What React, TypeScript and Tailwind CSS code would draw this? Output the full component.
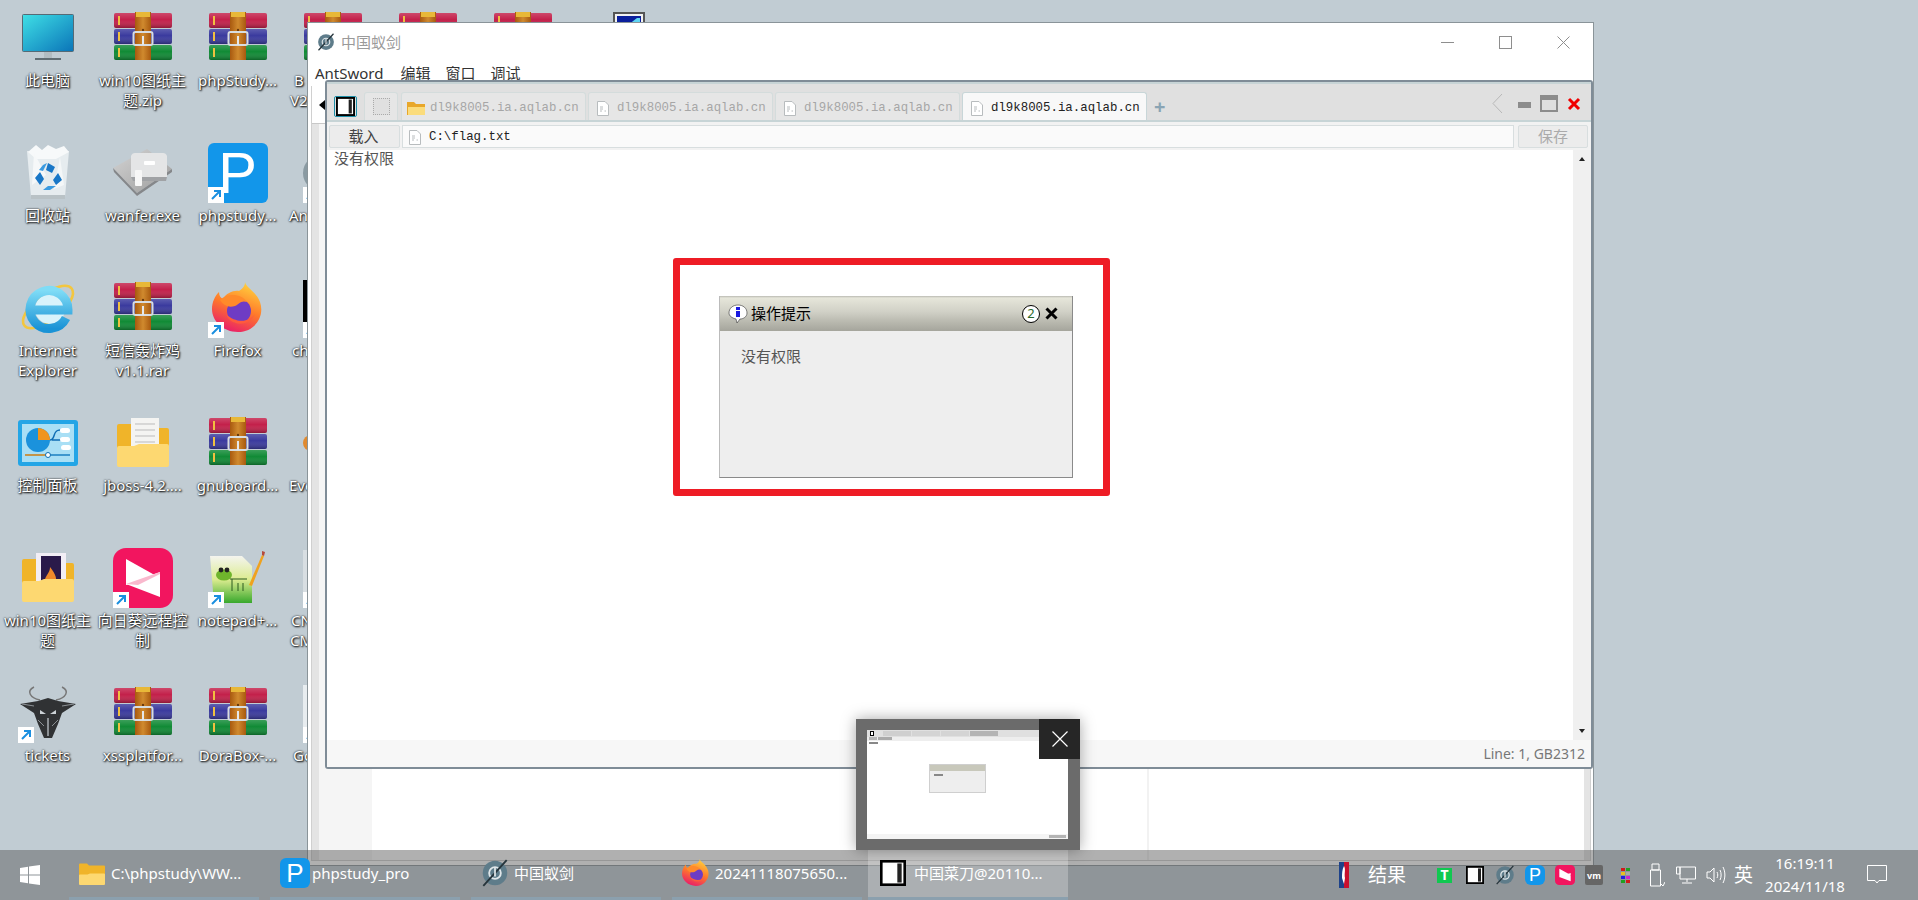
import type { ReactNode } from "react"

const sans = "font-['Noto_Sans','Noto_Sans_CJK_SC',sans-serif]"
const mono = "font-['Liberation_Mono','Noto_Sans_CJK_SC',monospace]"
const labelText = "whitespace-pre text-center text-[15px] leading-[20px] text-white [text-shadow:1px_1px_2px_#000,0_0_2px_#000]"

const RarIcon = () => (
  <svg width="58" height="48" viewBox="0 0 58 48" className="mb-1">
    <defs>
      <linearGradient id="bookShade" x1="0" y1="0" x2="0" y2="1">
        <stop offset="0" stopColor="#fff" stopOpacity="0.18" />
        <stop offset="0.45" stopColor="#fff" stopOpacity="0" />
        <stop offset="1" stopColor="#000" stopOpacity="0.28" />
      </linearGradient>
      <linearGradient id="strap" x1="0" y1="0" x2="1" y2="0">
        <stop offset="0" stopColor="#a8590f" />
        <stop offset="0.5" stopColor="#d08a2e" />
        <stop offset="1" stopColor="#a8590f" />
      </linearGradient>
    </defs>
    <rect x="0" y="1" width="58" height="15" rx="2" fill="#c3204a" />
    <rect x="0" y="17" width="58" height="15" rx="2" fill="#3a3a9e" />
    <rect x="0" y="33" width="58" height="15" rx="2" fill="#108a35" />
    <rect x="0" y="1" width="58" height="15" rx="2" fill="url(#bookShade)" />
    <rect x="0" y="17" width="58" height="15" rx="2" fill="url(#bookShade)" />
    <rect x="0" y="33" width="58" height="15" rx="2" fill="url(#bookShade)" />
    <rect x="4" y="4" width="2" height="9" fill="#f0c040" />
    <rect x="4" y="20" width="2" height="9" fill="#f0c040" />
    <rect x="4" y="36" width="2" height="9" fill="#f0c040" />
    <rect x="21" y="0" width="16" height="48" fill="url(#strap)" />
    <rect x="22" y="0" width="14" height="5" fill="#e8b838" />
    <circle cx="29" cy="18" r="1.2" fill="#6b3a0c" />
    <rect x="19.5" y="20" width="19" height="13" rx="2" fill="none" stroke="#d8dde0" strokeWidth="2" />
    <rect x="28" y="24" width="2" height="9" fill="#e6e8ea" />
  </svg>
)

const AntLogo = ({ size = 18 }: { size?: number }) => (
  <svg width={size} height={size} viewBox="0 0 24 24">
    <circle cx="12" cy="12" r="10.5" fill="#5e7c8a" />
    <circle cx="12" cy="12" r="5" fill="none" stroke="#dfe6e9" strokeWidth="1.6" />
    <path d="M2 23 L22 1" stroke="#26343b" strokeWidth="1.6" />
    <path d="M12 7 V15" stroke="#dfe6e9" strokeWidth="1.5" />
  </svg>
)

const Shortcut = () => (
  <span className="absolute left-0 bottom-0 flex h-4 w-4 items-center justify-center bg-white">
    <svg width="12" height="12" viewBox="0 0 12 12">
      <path d="M2 10 L9 3 M4 2 H10 V8" stroke="#1a8fe0" strokeWidth="2" fill="none" />
    </svg>
  </span>
)

const Firefox = ({ size = 52 }: { size?: number }) => (
  <svg width={size} height={size} viewBox="0 0 52 52">
    <defs>
      <linearGradient id="ff" x1="0.7" y1="0" x2="0.3" y2="1">
        <stop offset="0" stopColor="#ffd23e" />
        <stop offset="0.5" stopColor="#ff7a2a" />
        <stop offset="1" stopColor="#e8196c" />
      </linearGradient>
    </defs>
    <path d="M33 0 C34 6 44 9 48 20 C53 34 43 50 26 50 C11 50 0 39 0 27 C0 20 3 14 7 10 C7 14 9 16 11 17 C14 11 22 8 27 9 C31 6 33 4 33 0Z" fill="url(#ff)" />
    <circle cx="27" cy="29" r="12" fill="#6e3cc4" />
    <path d="M8 18 C16 10 30 12 35 20 C29 18 27 22 23 24 C17 26 12 24 8 18Z" fill="#ff8a2a" />
    <path d="M14 32 C18 44 36 46 43 32 C38 40 24 42 14 32Z" fill="#ff5a3c" />
  </svg>
)

const FolderBase = ({ w, h, children }: { w: number; h: number; children?: ReactNode }) => (
  <svg width={w} height={h} viewBox="0 0 52 50">
    <path d="M0 8 Q0 6 2 6 H16 L20 10 H50 Q52 10 52 12 V30 H0Z" fill="#f0b429" />
    {children}
    <path d="M0 30 Q0 28 2 28 H17 L22 26 H50 Q52 26 52 28 V47 Q52 49 50 49 H2 Q0 49 0 47Z" fill="#fdd871" />
  </svg>
)

const RecycleBin = () => (
  <svg width="44" height="56" viewBox="0 0 44 56">
    <path d="M1 6 L5 52 Q5 54 8 54 H36 Q39 54 39 52 L43 6 Z" fill="#e6ecef" />
    <path d="M2 7 L10 0 L16 5 L22 0 L30 4 L38 1 L43 7 L30 14 L10 14Z" fill="#f7f9fa" />
    <path d="M8 8 L20 30 L6 40Z" fill="#f6f8f9" />
    <path d="M34 12 L28 44 L38 40Z" fill="#f4f7f8" />
    <path d="M5 50 H39 V54 H5Z" fill="#b9c2c6" />
    <path d="M22 18 L29 22 L26 28 L20 25 Z M32 28 L36 35 L30 40 L27 35Z M14 40 L9 33 L14 27 L18 34Z" fill="#1977c7" />
    <path d="M17 20 L21 18 L17 26 L13 25Z M22 41 H30 L24 45 H17Z" fill="#3a9ae0" />
  </svg>
)

const AppleTv = () => (
  <svg width="60" height="48" viewBox="0 0 60 48">
    <defs>
      <linearGradient id="tvBase" x1="0" y1="0" x2="1" y2="1">
        <stop offset="0" stopColor="#d4d4d4" />
        <stop offset="1" stopColor="#9c9c9c" />
      </linearGradient>
    </defs>
    <path d="M0 19 L34 0 L59 20 L24 44Z" fill="url(#tvBase)" />
    <path d="M0 19 L24 44 L59 20 L59 23 L24 47 L1 23Z" fill="#85878a" />
    <path d="M18 7 Q19 4 22 4 H50 Q53 4 54 7 L54 28 H18Z" fill="#e4e5e6" />
    <path d="M18 28 H54 L53 32 H20Z" fill="#a0a2a5" />
    <rect x="31" y="12" width="11" height="4" rx="1" fill="#fff" />
    <rect x="22" y="21" width="7" height="16" rx="1" fill="#f7f7f7" />
  </svg>
)

const IeIcon = () => (
  <svg width="58" height="54" viewBox="0 0 58 54">
    <defs>
      <linearGradient id="ieBlue" x1="0" y1="0" x2="0" y2="1">
        <stop offset="0" stopColor="#7fdcf6" />
        <stop offset="1" stopColor="#1a93d6" />
      </linearGradient>
    </defs>
    <ellipse cx="29" cy="26" rx="30" ry="13" transform="rotate(-38 29 26)" fill="none" stroke="#f3c63f" strokeWidth="2.6" />
    <circle cx="31" cy="28" r="15" fill="#d8f3fb" />
    <path d="M47 37 A19 19 0 1 1 49 29 H14" fill="none" stroke="url(#ieBlue)" strokeWidth="9" />
  </svg>
)

const ControlPanel = () => (
  <svg width="60" height="46" viewBox="0 0 60 46">
    <rect width="60" height="46" rx="3" fill="#23a5e6" />
    <rect x="4" y="4" width="52" height="38" fill="#a9dff5" />
    <circle cx="20" cy="20" r="12" fill="#1b92dc" />
    <path d="M20 8 A12 12 0 0 1 32 20 H20Z" fill="#f0951d" />
    <path d="M32 20 C38 20 34 10 42 10 M34 20 H44" stroke="#0f6eb4" strokeWidth="1.5" fill="none" />
    <rect x="42" y="8" width="10" height="5" rx="2.5" fill="#fff" />
    <rect x="42" y="17" width="10" height="5" rx="2.5" fill="#fff" />
    <rect x="43" y="25" width="10" height="5" rx="2.5" fill="#fff" />
    <path d="M7 35 H52" stroke="#1b7fc0" strokeWidth="1.5" />
    <path d="M7 35 H28" stroke="#f0951d" strokeWidth="1.5" />
    <circle cx="30" cy="35" r="2.5" fill="#fff" stroke="#0f6eb4" />
  </svg>
)

const SunloginIcon = () => (
  <svg width="60" height="60" viewBox="0 0 60 60">
    <rect width="60" height="60" rx="13" fill="#f2155f" />
    <path d="M13 11 L47 30 L13 37Z" fill="#fff" />
    <path d="M47 49 L13 36 L47 24Z" fill="#fff" />
    <path d="M13 36 L47 24 L47 26 L25 37Z" fill="#f9b8cd" />
  </svg>
)

const NotepadIcon = () => (
  <svg width="56" height="54" viewBox="0 0 56 54">
    <defs>
      <linearGradient id="np" x1="0" y1="0" x2="0" y2="1">
        <stop offset="0" stopColor="#f4f4ef" />
        <stop offset="0.5" stopColor="#dcec90" />
        <stop offset="1" stopColor="#38a82c" />
      </linearGradient>
    </defs>
    <path d="M0 5 H32 L42 15 V52 H4Z" fill="url(#np)" />
    <ellipse cx="14" cy="24" rx="8" ry="5.5" fill="#6fb52c" />
    <circle cx="11" cy="19" r="2.4" fill="#222" />
    <circle cx="17" cy="19" r="2.4" fill="#222" />
    <path d="M20 28 H37 M22 28 V40 M28 32 V40 M33 32 V40" stroke="#2b5a1e" strokeWidth="1" />
    <path d="M39 34 L52 4 L54 5 L42 35Z" fill="#efa21f" />
    <path d="M52 0 L55 1 L54 5 L52 4Z" fill="#b54a3c" />
  </svg>
)

const Tickets = () => (
  <svg width="56" height="54" viewBox="0 0 56 54">
    <path d="M14 1 C6 5 10 12 20 14 M42 1 C50 5 46 12 36 14" stroke="#777" strokeWidth="1.5" fill="none" />
    <path d="M0 18 L18 15 L28 12 L38 15 L56 18 L42 27 L38 38 L32 52 H24 L18 38 L14 27Z" fill="#303234" />
    <path d="M2 18 L14 20 M54 18 L42 20 M18 34 L24 40 M38 34 L32 40" stroke="#8c9195" strokeWidth="1" />
    <path d="M20 24 L26 28 L20 28Z M36 24 L30 28 L36 28Z" fill="#ccd2d6" />
    <path d="M27 32 H29 V50 H27Z" fill="#8b9094" />
  </svg>
)

const Monitor = () => (
  <svg width="52" height="48" viewBox="0 0 52 48">
    <defs>
      <linearGradient id="mon" x1="0" y1="0" x2="1" y2="1">
        <stop offset="0" stopColor="#3fe0e6" />
        <stop offset="1" stopColor="#0a74b8" />
      </linearGradient>
    </defs>
    <rect x="0.5" y="0.5" width="51" height="37" rx="1" fill="url(#mon)" stroke="#566a75" />
    <rect x="22" y="38" width="8" height="6" fill="#b2bcc1" />
    <rect x="13" y="44" width="26" height="2" fill="#606c72" />
  </svg>
)

const PBadge = ({ size, text }: { size: number; text: string }) => (
  <span
    className={`flex items-center justify-center rounded-md bg-[#1296ea] font-['Liberation_Sans',sans-serif] text-white ${text}`}
    style={{ width: size, height: size }}
  >
    P
  </span>
)

const CaidaoIcon = ({ w, h }: { w: number; h: number }) => (
  <svg width={w} height={h} viewBox="0 0 30 30">
    <rect x="1.5" y="1.5" width="27" height="27" fill="#fff" stroke="#000" strokeWidth="3" />
    <rect x="20" y="4" width="5" height="22" fill="#222" />
  </svg>
)

const FileIcon = () => (
  <svg width="12" height="15" viewBox="0 0 12 15" className="shrink-0">
    <path d="M0.5 0.5 H8 L11.5 4 V14.5 H0.5Z" fill="#fff" stroke="#b8bcbe" />
    <path d="M3 6 H6 M3 8 H6 M3 10 H5 M7.5 10 H9" stroke="#b8bcbe" />
  </svg>
)

const WinClose = () => (
  <svg width="13" height="13" viewBox="0 0 13 13">
    <path d="M0.5 0.5 L12.5 12.5 M12.5 0.5 L0.5 12.5" stroke="#8e8e8e" />
  </svg>
)

const ThinIcon = () => (
  <svg width="32" height="52" viewBox="0 0 32 52" className="ml-[22px]">
    <rect x="1" y="1" width="30" height="50" fill="#f2f2f2" stroke="#555" strokeWidth="2" />
    <rect x="4" y="4" width="24" height="44" fill="#0a1f9c" />
    <path d="M6 20 L24 6 L27 6 L27 14 L12 26 L6 26Z" fill="#5fd4f2" />
  </svg>
)

type Item = { icon?: ReactNode; label?: string; short?: boolean; offset?: string }

const columns: Item[][] = [
  [
    { icon: <Monitor />, label: "此电脑" },
    { icon: <RecycleBin />, label: "回收站" },
    { icon: <IeIcon />, label: "Internet\nExplorer" },
    { icon: <ControlPanel />, label: "控制面板" },
    { icon: <FolderBase w={52} h={50}><rect x="14" y="0" width="30" height="36" fill="#f2eef5" /><rect x="19" y="3" width="20" height="30" fill="#2a1a4a" /><path d="M24 32 C20 24 28 22 28 14 C34 22 36 26 32 32Z" fill="#ef8a2a" /></FolderBase>, label: "win10图纸主\n题" },
    { icon: <Tickets />, label: "tickets", short: true },
  ],
  [
    { icon: <RarIcon />, label: "win10图纸主\n题.zip" },
    { icon: <AppleTv />, label: "wanfer.exe" },
    { icon: <RarIcon />, label: "短信轰炸鸡\nv1.1.rar" },
    { icon: <FolderBase w={52} h={50}><rect x="14" y="0" width="28" height="34" fill="#f4f4f2" /><path d="M18 6 H38 M18 12 H38 M18 18 H38 M18 24 H38" stroke="#bbb" /></FolderBase>, label: "jboss-4.2...." },
    { icon: <SunloginIcon />, label: "向日葵远程控\n制", short: true },
    { icon: <RarIcon />, label: "xssplatfor..." },
  ],
  [
    { icon: <RarIcon />, label: "phpStudy..." },
    { icon: <PBadge size={60} text="text-[58px] leading-none" />, label: "phpstudy...", short: true },
    { icon: <Firefox />, label: "Firefox", short: true },
    { icon: <RarIcon />, label: "gnuboard..." },
    { icon: <NotepadIcon />, label: "notepad+...", short: true },
    { icon: <RarIcon />, label: "DoraBox-..." },
  ],
  // this column mostly sits under the window, only the start of each label shows
  [
    { icon: <RarIcon />, label: "B\nV2", offset: "ml-[5px] self-start" },
    { icon: <span className="h-9 w-[60px] rounded-full bg-[#8a9aa2]" />, label: "An", short: true, offset: "ml-[4px] self-start" },
    { icon: <span className="h-[56px] w-[60px] bg-black" />, label: "ch", short: true, offset: "ml-[7px] self-start" },
    { icon: <span className="h-4 w-[60px] rounded-full bg-[#e08a30]" />, label: "Eve", offset: "ml-[4px] self-start" },
    { icon: <span className="h-[56px] w-[60px] bg-[#d8dee2]" />, label: "CN\nCM", short: true, offset: "ml-[5px] self-start" },
    { icon: <span className="h-[56px] w-[60px] bg-[#e8edf0]" />, label: "Go", short: true, offset: "ml-[8px] self-start" },
  ],
  [{ icon: <RarIcon /> }],
  [{ icon: <RarIcon /> }],
  [{ icon: <ThinIcon /> }],
]

const DesktopIcon = ({ icon, label, short, offset }: Item) => (
  <div className="flex h-[135px] w-[95px] shrink-0 flex-col items-center">
    <div className="relative flex h-[60px] w-[60px] shrink-0 items-center justify-center">
      {icon}
      {short && <Shortcut />}
    </div>
    {label && <div className={`mt-[2px] ${labelText} ${offset ?? ""}`}>{label}</div>}
  </div>
)

const Tab = ({ children, active }: { children: ReactNode; active?: boolean }) => (
  <div
    className={`flex h-[28px] w-[185px] items-center gap-[5px] rounded-t-[3px] border border-b-0 pl-[5px] pt-[3px] text-[12.4px] ${mono} ${
      active ? "border-[#c8d6d8] bg-[#f8f8f8] text-[#222]" : "border-[#d4dcdc] bg-[#e6e6e6] text-[#a6a6a6]"
    }`}
  >
    {children}
  </div>
)

const Mini = () => (
  <div className="relative h-[109px] w-[201px] bg-white">
    <div className="flex h-[7px] items-center gap-[1px] bg-[#e0e0e0] pl-[3px]">
      <span className="h-[5px] w-[4px] border border-black bg-white" />
      <span className="ml-[8px] h-[5px] w-[28px] bg-[#cfcfcf]" />
      <span className="h-[5px] w-[28px] bg-[#d4d4d4]" />
      <span className="h-[5px] w-[28px] bg-[#d4d4d4]" />
      <span className="h-[5px] w-[28px] bg-[#b4b4b4]" />
    </div>
    <div className="flex h-[4px] gap-[1px] bg-[#eeeeee] pl-[2px]">
      <span className="h-[3px] w-[8px] bg-[#b5b5b5]" />
      <span className="h-[3px] w-[14px] bg-[#aaaaaa]" />
    </div>
    <div className="ml-[2px] mt-[1px] h-[2px] w-[9px] bg-[#888]" />
    <div className="absolute left-[62px] top-[34px] h-[29px] w-[57px] border border-[#cfcfcf] bg-[#eeeeee]">
      <div className="h-[6px] bg-[#c8c8bb]" />
      <div className="ml-[4px] mt-[3px] h-[2px] w-[9px] bg-[#888]" />
    </div>
    <div className="absolute bottom-0 left-0 flex h-[5px] w-full justify-end bg-[#f4f4f4] pr-[2px]">
      <span className="mt-[1px] h-[3px] w-[17px] bg-[#b4b4b4]" />
    </div>
  </div>
)

const TaskItem = ({ children, active, width }: { children: ReactNode; active?: boolean; width: string }) => (
  <div
    className={`flex h-full items-center gap-[6px] border-b-[3px] border-[#8ba0ae] pb-[1px] pl-[10px] ${width} ${
      active ? "bg-white/25" : ""
    }`}
  >
    {children}
  </div>
)

export default function App() {
  return (
    <div className={`relative h-[900px] w-[1918px] overflow-hidden bg-[#c1ccd3] ${sans}`}>
      {/* desktop */}
      <div className="flex pt-[8px]">
        {columns.map((col, i) => (
          <div key={i} className="flex flex-col">
            {col.map((item, j) => (
              <DesktopIcon key={j} {...item} />
            ))}
          </div>
        ))}
      </div>

      {/* antsword shell window behind */}
      <div className="absolute left-[307px] top-[22px] flex h-[844px] w-[1287px] flex-col border border-[#8a9499] bg-white">
        <div className="flex h-[38px] items-center pl-[9px]">
          <AntLogo />
          <span className="ml-[6px] text-[15px] text-[#9a9a9a]">中国蚁剑</span>
          <div className="ml-auto flex items-center">
            <span className="h-px w-[13px] bg-[#8e8e8e]" />
            <span className="ml-[45px] h-[13px] w-[13px] border border-[#8e8e8e]" />
            <span className="ml-[45px] mr-[23px] flex"><WinClose /></span>
          </div>
        </div>
        <div className="flex h-[24px] items-center gap-[15px] pl-[7px] text-[15px] leading-none text-[#333]">
          <span className="mr-[2px]">AntSword</span>
          <span>编辑</span>
          <span>窗口</span>
          <span>调试</span>
        </div>
        <div className="ml-[3px] mr-[2px] mt-[1px] flex min-h-0 flex-1 flex-col border-x border-b border-[#d0d0d0]">
          <div className="flex h-[38px] items-center border-b border-[#c8c8c8] pl-[7px] text-[10px]">
            <span className="h-0 w-0 border-y-[5px] border-r-[6px] border-y-transparent border-r-black" />
          </div>
          <div className="flex min-h-0 flex-1">
            <div className="w-[7px] bg-[#e4e4e4]" />
            <div className="w-[53px] bg-[#f5f5f5]" />
            <div className="w-[775px]" />
            <div className="w-[2px] bg-[#f2f2f2]" />
            <div className="flex-1" />
            <div className="w-[6px] bg-[#e4e4e4]" />
          </div>
        </div>
        <div className="h-[4px]" />
      </div>

      {/* caidao window */}
      <div className="absolute left-[325px] top-[80px] flex h-[689px] w-[1268px] flex-col rounded-[3px] border-2 border-[#7f8c97] bg-white">
        <div className="flex h-[40px] items-end border-y-[2px] border-t-[#c7d4d6] border-b-[#c7d4d6] bg-[#e0e0e0] pl-[7px]">
          <div className="mb-[3px] mr-[7px] flex">
            <span className="flex rounded-[2px] border border-[#1f8fa8]"><CaidaoIcon w={21} h={19} /></span>
          </div>
          <div className="flex h-[28px] w-[34px] items-center justify-center rounded-t-[3px] border border-b-0 border-[#d4dcdc] bg-[#e6e6e6]">
            <span className="h-[17px] w-[17px] border border-dotted border-[#aaa] bg-[#e0e0e0]" />
          </div>
          <div className="ml-[3px] flex gap-[2px]">
            <Tab>
              <svg width="19" height="16" viewBox="0 0 19 16" className="shrink-0">
                <path d="M0 2 H7 L9 4 H18 V15 H0Z" fill="#e8a72a" />
                <path d="M1 7 H18 V15 H1Z" fill="#fbdc7c" />
              </svg>
              <span className="-ml-[1px]">dl9k8005.ia.aqlab.cn</span>
            </Tab>
            <Tab><span className="mx-[3px] flex"><FileIcon /></span>dl9k8005.ia.aqlab.cn</Tab>
            <Tab><span className="mx-[3px] flex"><FileIcon /></span>dl9k8005.ia.aqlab.cn</Tab>
            <Tab active><span className="mx-[3px] flex"><FileIcon /></span>dl9k8005.ia.aqlab.cn</Tab>
          </div>
          <span className="mb-[1px] ml-[7px] text-[20px] font-bold leading-[24px] text-[#8aa4b4]">+</span>
          <div className="mb-[6px] ml-auto flex items-center pr-[10px]">
            <svg width="11" height="21" viewBox="0 0 11 21"><path d="M10 1 L1 10.5 L10 20" fill="none" stroke="#b8b8b8" /></svg>
            <span className="ml-[15px] mt-[2px] h-[6px] w-[13px] bg-[#8c8c8c]" />
            <span className="ml-[9px] h-[17px] w-[18px] border-2 border-t-[5px] border-[#8c8c8c] bg-[#dedede]" />
            <svg width="14" height="14" viewBox="0 0 14 14" className="ml-[9px]"><path d="M2 2 L12 12 M12 2 L2 12" stroke="#f00000" strokeWidth="3" /></svg>
          </div>
        </div>
        <div className="flex h-[28px] items-start gap-[2px] bg-[#f2f2f2] px-[2px] pr-[3px] pt-[3px]">
          <div className="flex h-[23px] w-[71px] items-center justify-center rounded-[2px] border border-[#d8dedf] bg-[#ececec] pr-[2px] text-[15px] text-[#444]">载入</div>
          <div className={`flex h-[23px] flex-1 items-center gap-[8px] border border-[#d8dedf] bg-[#fafafa] pl-[6px] pt-[1px] text-[12.4px] text-[#222] ${mono}`}>
            <FileIcon />
            C:\flag.txt
          </div>
          <div className="ml-[2px] flex h-[23px] w-[70px] items-center justify-center rounded-[2px] border border-[#d8dedf] bg-[#ececec] text-[15px] text-[#aaa]">保存</div>
        </div>
        <div className="flex min-h-0 flex-1">
          <div className="flex-1 pl-[7px] text-[15px] leading-[16px] text-[#555]">没有权限</div>
          <div className="flex w-[18px] flex-col items-center justify-between bg-[#f0f0f0] py-[7px]">
            <span className="h-0 w-0 border-x-[3.5px] border-b-[4px] border-x-transparent border-b-[#222]" />
            <span className="h-0 w-0 border-x-[3.5px] border-t-[4px] border-x-transparent border-t-[#222]" />
          </div>
        </div>
        <div className="flex h-[27px] items-center justify-end bg-[#f7f7f7] pr-[6px] text-[14px] text-[#777]">Line: 1, GB2312</div>
      </div>

      {/* red annotation */}
      <div className="absolute left-[673px] top-[258px] h-[238px] w-[437px] rounded-[3px] border-[7px] border-[#ee1c25] bg-white pl-[39px] pt-[31px]">
        <div className="flex h-[182px] w-[354px] flex-col border-x border-b border-l-[#bbbbbb] border-r-[#8a8a8a] border-b-[#8a8a8a] bg-[#eeeeee]">
          <div className="flex h-[35px] items-center bg-[linear-gradient(#b9b9b2_0,#e6e6da_2px,#d0d0c6_16px,#bdbdb3_24px,#a5a59c_100%)] pl-[8px] pr-[14px] text-[15px] text-black">
            <svg width="20" height="20" viewBox="0 0 20 20">
              <path d="M10 1 C15 1 19 4 19 9 C19 13 15 15 12 15 L9 19 L8 15 C4 14 1 12 1 9 C1 4 5 1 10 1Z" fill="#fff" stroke="#333" strokeWidth="0.6" />
              <rect x="8" y="7" width="4" height="6" fill="#1a1ae0" />
              <rect x="8" y="3" width="4" height="3" fill="#1a1ae0" />
            </svg>
            <span className="ml-[3px]">操作提示</span>
            <span className="ml-auto flex h-[18px] w-[18px] items-center justify-center rounded-full border border-black bg-white text-[13px] leading-none text-[#2a6a2a]">2</span>
            <svg width="13" height="13" viewBox="0 0 13 13" className="ml-[5px]"><path d="M1.5 1.5 L11.5 11.5 M11.5 1.5 L1.5 11.5" stroke="#000" strokeWidth="3" /></svg>
          </div>
          <div className="pl-[21px] pt-[14px] text-[15px] leading-[22px] text-[#555]">没有权限</div>
        </div>
      </div>

      {/* taskbar */}
      <div className="absolute inset-x-0 bottom-0 flex h-[50px] items-center bg-[rgba(87,87,87,0.47)] text-white">
        <div className="flex h-full w-[69px] items-center pl-[20px]">
          <svg width="20" height="20" viewBox="0 0 20 20" fill="#fff">
            <path d="M0 3 L8 1.8 V9.5 H0Z M9 1.6 L20 0 V9.5 H9Z M0 10.5 H8 V18.2 L0 17Z M9 10.5 H20 V20 L9 18.4Z" />
          </svg>
        </div>
        <TaskItem width="w-[190px]">
          <FolderBase w={26} h={26} />
          <span className="text-[15px]">C:\phpstudy\WW...</span>
        </TaskItem>
        <div className="w-[11px]" />
        <TaskItem width="w-[190px]">
          <PBadge size={30} text="text-[26px] leading-none" />
          <span className="-ml-[4px] text-[15px]">phpstudy_pro</span>
        </TaskItem>
        <div className="w-[11px]" />
        <TaskItem width="w-[190px]">
          <AntLogo size={28} />
          <span className="-ml-[1px] text-[15px]">中国蚁剑</span>
        </TaskItem>
        <div className="w-[11px]" />
        <TaskItem width="w-[190px]">
          <Firefox size={28} />
          <span className="-ml-[1px] text-[15px]">20241118075650...</span>
        </TaskItem>
        <div className="w-[6px]" />
        <TaskItem active width="w-[200px]">
          <CaidaoIcon w={30} h={26} />
          <span className="text-[15px]">中国菜刀@20110...</span>
        </TaskItem>

        <div className="ml-auto flex h-full items-center">
          <svg width="10" height="26" viewBox="0 0 10 26">
            <rect width="10" height="26" rx="1" fill="#fff" />
            <path d="M0 0 H5 V26 H0Z" fill="#1d428a" />
            <path d="M5 0 H10 V26 H5Z" fill="#c8102e" />
            <path d="M5 4 C7 7 5 12 6 16 L5 22 L3 16 C3 11 3 8 5 4Z" fill="#fff" />
          </svg>
          <span className="ml-[19px] w-[69px] text-[19px]">结果</span>
          <span className="flex h-[15px] w-[15px] items-center justify-center bg-[#10c850] text-[14px] font-bold leading-none">T</span>
          <span className="ml-[13px] flex"><CaidaoIcon w={20} h={18} /></span>
          <span className="ml-[10px] flex"><AntLogo size={20} /></span>
          <span className="ml-[10px] flex"><PBadge size={20} text="text-[18px] leading-none" /></span>
          <span className="ml-[10px] flex">
            <svg width="20" height="20" viewBox="0 0 60 60">
              <rect width="60" height="60" rx="13" fill="#f2155f" />
              <path d="M13 11 L47 30 L13 37Z M47 49 L13 36 L47 24Z" fill="#fff" />
            </svg>
          </span>
          <span className="ml-[10px] flex h-[20px] w-[18px] items-center justify-center rounded-[2px] bg-[#666] text-[9px] font-bold leading-none">vm</span>
          <span className="ml-[18px] grid w-[9px] grid-cols-2 gap-[1px]">
            <i className="h-[3px] bg-[#d01818]" /><i className="h-[3px] bg-[#20a020]" />
            <i className="h-[3px] bg-[#e8c020]" /><i className="h-[3px] bg-[#aaa]" />
            <i className="h-[3px] bg-[#2020e0]" /><i className="h-[3px] bg-[#d020d0]" />
            <i className="h-[3px] bg-[#20a020]" /><i className="h-[3px] bg-[#d01818]" />
          </span>
          <svg width="16" height="24" viewBox="0 0 16 24" className="ml-[19px]" fill="none" stroke="#fff">
            <path d="M3 1 H10 V7 H3Z M1.5 7 H11.5 V23 H1.5Z" />
            <path d="M11 20 L14 23 L16 19" />
          </svg>
          <svg width="20" height="18" viewBox="0 0 20 18" className="ml-[11px]" fill="none" stroke="#fff">
            <path d="M4 1 H19.5 V13 H4Z M0.5 1 H4 V8 H0.5Z M11 13 V16 M6 17 H16" />
          </svg>
          <svg width="20" height="18" viewBox="0 0 20 18" className="ml-[10px]" fill="none" stroke="#fff">
            <path d="M1 6 H4 L8 2 V16 L4 12 H1Z M11 6 C12 8 12 10 11 12 M14 4 C15.5 7 15.5 11 14 14 M17 1 C19.5 6 19.5 12 17 17" />
          </svg>
          <span className="ml-[8px] w-[20px] text-[19px] leading-none">英</span>
          <div className="ml-[9px] flex w-[84px] flex-col items-center text-[15px] leading-[23px]">
            <span>16:19:11</span>
            <span>2024/11/18</span>
          </div>
          <svg width="20" height="20" viewBox="0 0 20 20" className="ml-[20px] mr-[31px]" fill="none" stroke="#fff">
            <path d="M0.5 0.5 H19.5 V15.5 H12 L10 18 L8 15.5 H0.5Z" />
          </svg>
        </div>
      </div>

      {/* taskbar thumbnail */}
      <div className="absolute left-[856px] top-[719px] flex h-[131px] w-[224px] flex-col bg-[#6b6b6b] pl-[11px] pt-[11px] shadow-[0_0_14px_rgba(0,0,0,0.35)]">
        <Mini />
        <button className="absolute right-0 top-0 flex h-[40px] w-[41px] items-center justify-center bg-[#262626]">
          <svg width="16" height="16" viewBox="0 0 16 16">
            <path d="M0.5 0.5 L15.5 15.5 M15.5 0.5 L0.5 15.5" stroke="#fff" strokeWidth="1.2" />
          </svg>
        </button>
      </div>
    </div>
  )
}
